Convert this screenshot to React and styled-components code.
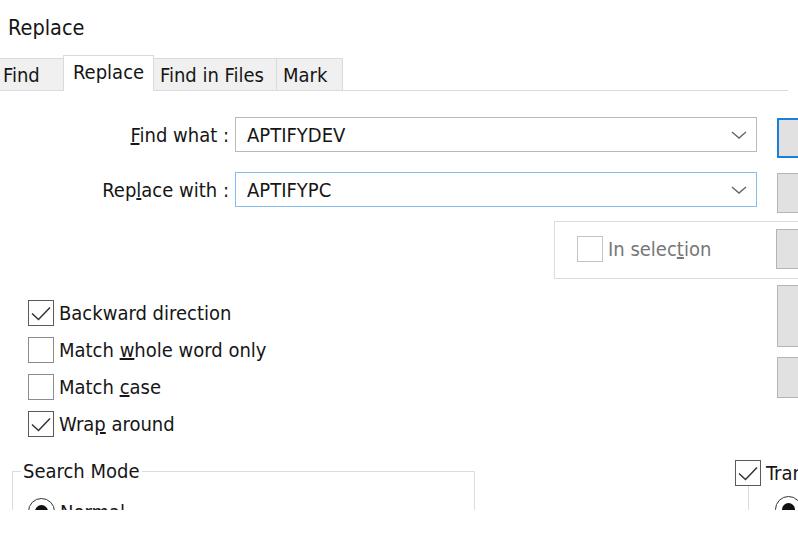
import React from "react";
import styled, { createGlobalStyle } from "styled-components";

const GlobalStyle = createGlobalStyle`
  html, body {
    margin: 0;
    padding: 0;
    background: #fff;
  }
  body {
    font-family: "DejaVu Sans Condensed", "DejaVu Sans", sans-serif;
    font-size: 20px;
    color: #161616;
  }
`;

const Dialog = styled.div`
  width: 798px;
  height: 510px;
  overflow: hidden;
  background: #fff;
`;

const Title = styled.div`
  height: 55px;
  line-height: 56px;
  padding-left: 8px;
  font-size: 21.5px;
`;

const TabStrip = styled.div`
  display: flex;
  align-items: flex-end;
  width: 788px;
  height: 36px;
  box-sizing: border-box;
  border-bottom: 1px solid #dadada;
`;

const Tab = styled.div`
  box-sizing: border-box;
  width: ${(p) => p.$w}px;
  height: ${(p) => (p.$active ? 36 : 32)}px;
  margin-bottom: ${(p) => (p.$active ? -1 : 0)}px;
  margin-left: -1px;
  padding-left: ${(p) => p.$pl}px;
  padding-top: 4px;
  line-height: 24px;
  white-space: nowrap;
  background: ${(p) => (p.$active ? "#fff" : "#f0f0f0")};
  border: 1px solid #dadada;
  border-bottom: none;
  position: relative;
  z-index: ${(p) => (p.$active ? 1 : 0)};

  &:first-child {
    margin-left: 0;
    border-left: none;
  }
`;

const Body = styled.div`
  width: 917px;
  display: flex;
  flex-direction: column;
`;

const FieldRow = styled.div`
  display: flex;
  align-items: flex-start;
  margin-top: ${(p) => p.$top}px;
`;

const Label = styled.label`
  width: 235px;
  flex-shrink: 0;
  box-sizing: border-box;
  padding-right: 6px;
  height: 35px;
  line-height: 37px;
  text-align: right;
  white-space: nowrap;
`;

const Combo = styled.div`
  width: 522px;
  height: 35px;
  flex-shrink: 0;
  box-sizing: border-box;
  display: flex;
  align-items: center;
  padding: 0 9px 0 11px;
  border: 1px solid ${(p) => (p.$focused ? "#86bdf0" : "#b9b9b9")};
  background: #fff;
`;

const ComboText = styled.span`
  flex: 1;
  white-space: nowrap;
`;

const Button = styled.div`
  width: 140px;
  height: ${(p) => p.$h}px;
  box-sizing: border-box;
  flex-shrink: 0;
  background: #e1e1e1;
  border: ${(p) => (p.$default ? "2px solid #1a7fd9" : "1px solid #b4b4b4")};
`;

const ButtonSlot = styled.div`
  margin-left: 20px;
  margin-top: 1px;
`;

const SelectionGroup = styled.div`
  margin-top: 8px;
  margin-left: 554px;
  width: 363px;
  box-sizing: border-box;
  border: 1px solid #dcdcdc;
  padding: 7px 0 9px 22px;
  display: flex;
  align-items: center;
`;

const SelectionSpacer = styled.div`
  flex: 1;
`;

const OptionsRow = styled.div`
  display: flex;
  justify-content: space-between;
  align-items: flex-start;
`;

const CheckList = styled.div`
  display: flex;
  flex-direction: column;
  gap: 11px;
  padding: 21px 0 0 28px;
`;

const CheckRow = styled.div`
  display: flex;
  align-items: center;
  height: 26px;
  gap: 5px;
  white-space: nowrap;
  color: ${(p) => (p.$disabled ? "#777" : "inherit")};
`;

const Box = styled.span`
  width: 26px;
  height: 26px;
  box-sizing: border-box;
  flex-shrink: 0;
  background: #fff;
  border: 1px solid
    ${(p) => (p.$disabled ? "#c4c4c4" : p.$checked ? "#5a5a5a" : "#8c8c8c")};
  display: flex;
  align-items: center;
  justify-content: center;
`;

const ButtonColumn = styled.div`
  display: flex;
  flex-direction: column;
  gap: 10px;
  margin-top: 6px;
`;

const GroupRow = styled.div`
  display: flex;
  align-items: flex-start;
  margin-top: 23px;
`;

const Group = styled.fieldset`
  margin: 0 0 0 ${(p) => p.$left}px;
  width: ${(p) => p.$w}px;
  flex-shrink: 0;
  height: 120px;
  box-sizing: border-box;
  border: 1px solid #dcdcdc;
  padding: 0 0 0 ${(p) => p.$pad}px;
`;

const Legend = styled.legend`
  padding: 0 2px;
  line-height: 22px;
  white-space: nowrap;
`;

const CheckLegend = styled.legend`
  padding: 0;
  margin-left: -40px;
  background: #fff;
`;

const RadioRow = styled.div`
  display: flex;
  align-items: center;
  gap: 5px;
  height: 27px;
  margin-top: ${(p) => p.$top}px;
  margin-left: ${(p) => p.$left}px;
  white-space: nowrap;
`;

const Radio = styled.span`
  width: 27px;
  height: 27px;
  flex-shrink: 0;
  box-sizing: border-box;
  border-radius: 50%;
  border: 1.5px solid #333;
  display: flex;
  align-items: center;
  justify-content: center;

  &::after {
    content: "";
    width: 13px;
    height: 13px;
    border-radius: 50%;
    background: #111;
  }
`;

const Chevron = () => (
  <svg width="16" height="8" viewBox="0 0 16 8">
    <polyline points="1,1 8,7 15,1" fill="none" stroke="#666" strokeWidth="1.4" />
  </svg>
);

const CheckMark = () => (
  <svg width="24" height="24" viewBox="0 0 24 24">
    <polyline points="3,12.5 9.5,18.5 21,6.5" fill="none" stroke="#333" strokeWidth="1.5" />
  </svg>
);

const Checkbox = ({ checked, disabled, children }) => (
  <CheckRow $disabled={disabled}>
    <Box $checked={checked} $disabled={disabled}>
      {checked && <CheckMark />}
    </Box>
    {children && <span>{children}</span>}
  </CheckRow>
);

const tabs = [
  { name: "Find", w: 64, pl: 3 },
  { name: "Replace", w: 91, pl: 9, active: true },
  { name: "Find in Files", w: 124, pl: 6 },
  { name: "Mark", w: 67, pl: 6 },
];

export default function App() {
  return (
    <>
      <GlobalStyle />
      <Dialog>
        <Title>Replace</Title>
        <TabStrip>
          {tabs.map((t) => (
            <Tab key={t.name} $w={t.w} $pl={t.pl} $active={t.active}>
              {t.name}
            </Tab>
          ))}
        </TabStrip>

        <Body>
          <FieldRow $top={26}>
            <Label>
              <u>F</u>ind what :
            </Label>
            <Combo>
              <ComboText>APTIFYDEV</ComboText>
              <Chevron />
            </Combo>
            <ButtonSlot>
              <Button $h={40} $default />
            </ButtonSlot>
          </FieldRow>

          <FieldRow $top={14}>
            <Label>
              Rep<u>l</u>ace with :
            </Label>
            <Combo $focused>
              <ComboText>APTIFYPC</ComboText>
              <Chevron />
            </Combo>
            <ButtonSlot>
              <Button $h={40} />
            </ButtonSlot>
          </FieldRow>

          <SelectionGroup>
            <Checkbox disabled>
              In selec<u>t</u>ion
            </Checkbox>
            <SelectionSpacer />
            <Button $h={40} />
          </SelectionGroup>

          <OptionsRow>
            <CheckList>
              <Checkbox checked>Backward direction</Checkbox>
              <Checkbox>
                Match <u>w</u>hole word only
              </Checkbox>
              <Checkbox>
                Match <u>c</u>ase
              </Checkbox>
              <Checkbox checked>
                Wra<u>p</u> around
              </Checkbox>
            </CheckList>
            <ButtonColumn>
              <Button $h={62} />
              <Button $h={41} />
            </ButtonColumn>
          </OptionsRow>

          <GroupRow>
            <Group $left={12} $w={463} $pad={8}>
              <Legend>Search Mode</Legend>
              <RadioRow $top={16} $left={7}>
                <Radio />
                <span>Normal</span>
              </RadioRow>
            </Group>
            <Group $left={273} $w={200} $pad={26}>
              <CheckLegend>
                <Checkbox checked>Transparency</Checkbox>
              </CheckLegend>
              <RadioRow $top={10} $left={0}>
                <Radio />
                <span>On losing focus</span>
              </RadioRow>
            </Group>
          </GroupRow>
        </Body>
      </Dialog>
    </>
  );
}
